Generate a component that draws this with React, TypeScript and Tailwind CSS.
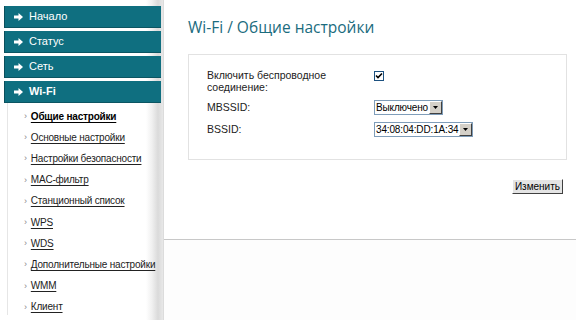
import React from 'react';

const topMenu = [
  { label: 'Начало', active: false },
  { label: 'Статус', active: false },
  { label: 'Сеть', active: false },
  { label: 'Wi-Fi', active: true },
];

const subMenu = [
  { label: 'Общие настройки', current: true },
  { label: 'Основные настройки' },
  { label: 'Настройки безопасности' },
  { label: 'MAC-фильтр' },
  { label: 'Станционный список' },
  { label: 'WPS' },
  { label: 'WDS' },
  { label: 'Дополнительные настройки' },
  { label: 'WMM' },
  { label: 'Клиент' },
];

const Arrow = () => (
  <svg width="9" height="8" viewBox="0 0 9 8" className="shrink-0">
    <path d="M0 2.5h4.5V0L9 4 4.5 8V5.5H0z" fill="#fff" />
  </svg>
);

const SelectBox = ({ value, width }: { value: string; width: string }) => (
  <div className={`flex items-center h-[15px] border border-[#7f9db9] bg-white ${width}`}>
    <span className="flex-1 pl-[1px] text-[10px] tracking-[-0.15px] leading-none text-black whitespace-nowrap overflow-hidden">{value}</span>
    <span className="w-[13px] h-[13px] flex items-center justify-center bg-[#d4d0c8] border border-t-white border-l-white border-r-[#404040] border-b-[#404040]">
      <svg width="5" height="3" viewBox="0 0 5 3">
        <path d="M0 0h5L2.5 3z" fill="#000" />
      </svg>
    </span>
  </div>
);

export default function App() {
  return (
    <div className="w-[576px] h-[320px] flex bg-white overflow-hidden font-['Liberation_Sans',sans-serif]">
      {/* Sidebar */}
      <div className="w-[163px] shrink-0 flex flex-col pt-[6px] pl-[4px] bg-[linear-gradient(to_right,#ffffff_0px,#ffffff_146px,#f0f0f0_152px,#dadada_158px,#e8e8e8_163px)]">
        <div className="flex flex-col gap-[3px]">
          {topMenu.map((m) => (
            <div
              key={m.label}
              className="h-[22px] w-[157px] flex items-center gap-[6px] pl-[9px] bg-[#0f6f80] border-l border-l-[#0a4f5c] border-b border-b-[#0b5562] text-white text-[11px]"
            >
              <Arrow />
              <span className={m.active ? 'font-bold' : ''}>{m.label}</span>
            </div>
          ))}
        </div>
        <div className="flex flex-col ml-[3px] border-l border-l-[#e6e6e6] pt-[6px] pl-[16px] gap-[6px]">
          {subMenu.map((s) => (
            <div key={s.label} className="flex items-center gap-[4px] h-[15.2px] text-[10px] tracking-[-0.2px] leading-none text-[#222]">
              <span className="text-[#888] text-[9px]">›</span>
              <span className={`underline underline-offset-2 whitespace-nowrap ${s.current ? 'font-bold text-black' : ''}`}>{s.label}</span>
            </div>
          ))}
        </div>
      </div>

      {/* Main */}
      <div className="flex-1 flex flex-col border-l border-l-[#dcdcdc]">
        <div className="h-[240px] flex flex-col pl-[24px] pr-[10px] border-b border-b-[#c8c8c8]">
          <h1 className="mt-[16px] text-[15.5px] leading-[22px] text-[#1b6c7e] font-['Open_Sans',sans-serif]">Wi-Fi / Общие настройки</h1>
          <div className="mt-[16px] w-[379px] h-[106px] border border-[#e2e2e2] pl-[18px] pt-[14px] text-[10.5px] text-[#222]">
            <div className="flex">
              <div className="w-[167px] leading-[12px]">
                Включить беспроводное
                <br />
                соединение:
              </div>
              <div className="mt-[2px] w-[10px] h-[10px] border border-[#1c5180] bg-white flex items-center justify-center">
                <svg width="8" height="8" viewBox="0 0 8 8">
                  <path d="M1 3.5l2 2L7 1.5" stroke="#000" strokeWidth="1.6" fill="none" />
                </svg>
              </div>
            </div>
            <div className="flex items-center mt-[7px]">
              <div className="w-[167px]">MBSSID:</div>
              <SelectBox value="Выключено" width="w-[69px]" />
            </div>
            <div className="flex items-center mt-[6px]">
              <div className="w-[167px]">BSSID:</div>
              <SelectBox value="34:08:04:DD:1A:34" width="w-[99px]" />
            </div>
          </div>
          <div className="flex justify-end w-[375px] mt-[19px]">
            <button className="h-[15px] px-[2px] text-[10px] leading-none text-black bg-[#e4e4e4] border border-t-white border-l-white border-r-[#404040] border-b-[#404040]">
              Изменить
            </button>
          </div>
        </div>
        <div className="flex-1 bg-[#fdfdfd]" />
      </div>
    </div>
  );
}
